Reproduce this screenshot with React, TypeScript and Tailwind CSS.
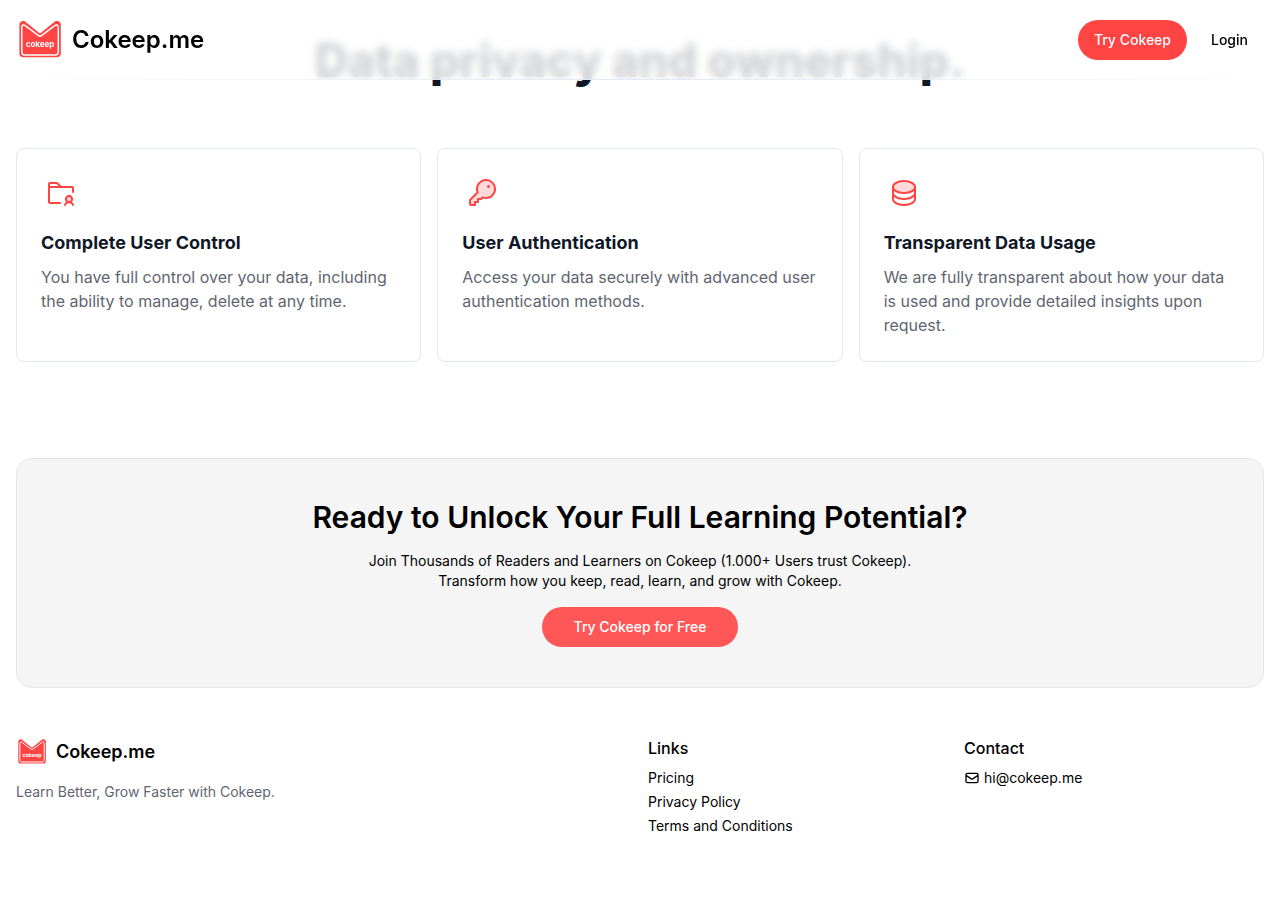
import type { ReactNode } from 'react';
import { HiOutlineMail } from 'react-icons/hi';
import { PiDatabaseDuotone, PiFolderUserDuotone, PiKeyDuotone } from 'react-icons/pi';

interface Feature {
  title: string;
  description: string;
  icon: ReactNode;
}

const features: Feature[] = [
  {
    title: 'Complete User Control',
    description: 'You have full control over your data, including the ability to manage, delete at any time.',
    icon: <PiFolderUserDuotone className="size-8" />,
  },
  {
    title: 'User Authentication',
    description: 'Access your data securely with advanced user authentication methods.',
    icon: <PiKeyDuotone className="size-8" />,
  },
  {
    title: 'Transparent Data Usage',
    description: 'We are fully transparent about how your data is used and provide detailed insights upon request.',
    icon: <PiDatabaseDuotone className="size-8" />,
  },
];

const links = ['Pricing', 'Privacy Policy', 'Terms and Conditions'];

const Logo = ({ className }: { className: string }) => (
  <svg viewBox="0 0 48 48" className={className} aria-hidden="true">
    <path
      d="M3.4 9C3.4 6 5.3 5 6.8 5H7.5C8.5 5 9.2 5.500 10 6.200L24 17.500L38 6.200C38.800 5.500 39.500 5 40.500 5H41.300C43 5 44.800 6 44.800 9V37.500C44.800 40 43.300 41.300 41 41.300H7.200C4.900 41.300 3.400 40 3.400 37.500Z"
      fill="#ff4444"
    />
    <path
      d="M5.800 11.500C5.800 8.800 7.700 8.300 9.300 9.700L22.500 19.700Q24 20.800 25.500 19.700L38.700 9.700C40.300 8.300 42.300 8.800 42.300 11.500V35.500C42.300 37.800 41.300 39 39.300 39H8.800C6.800 39 5.800 37.800 5.800 35.500Z"
      fill="none"
      stroke="#fff"
      strokeWidth="1.5"
    />
    <text
      x="24"
      y="31"
      textAnchor="middle"
      fontFamily="Inter, sans-serif"
      fontSize="8"
      fontWeight="700"
      fill="#fff"
    >
      cokeep
    </text>
  </svg>
);

const Header = () => (
  <header className="fixed inset-x-0 top-0 z-10 bg-white/80 backdrop-blur-xs">
    <div className="flex h-20 items-center justify-between px-4">
      <a href="#" className="flex items-center gap-2">
        <Logo className="size-12" />
        <span className="text-2xl font-semibold">Cokeep.me</span>
      </a>
      <nav className="flex items-center gap-2 text-sm font-medium">
        <button className="h-10 rounded-full bg-[#ff4444] px-4 text-white">Try Cokeep</button>
        <a href="#login" className="px-4 py-2">Login</a>
      </nav>
    </div>
    {/* Divider fading out towards both edges */}
    <div className="absolute inset-x-0 bottom-0 h-px bg-linear-to-r from-transparent via-slate-200 to-transparent"></div>
  </header>
);

const FeatureCard = ({ feature }: { feature: Feature }) => (
  <div className="rounded-lg border border-slate-200 p-6">
    <div className="mb-4 flex size-10 items-center justify-center text-[#ff4444]">{feature.icon}</div>
    <h3 className="mb-2 text-lg leading-7 font-bold text-gray-900">{feature.title}</h3>
    <p className="text-base text-[#5f6670]">{feature.description}</p>
  </div>
);

const CallToAction = () => (
  <section className="mt-24 flex flex-col items-center gap-4 rounded-2xl border border-neutral-200 bg-neutral-100 px-4 py-10 text-center">
    <h2 className="text-3xl font-semibold">Ready to Unlock Your Full Learning Potential?</h2>
    <p className="text-sm">
      Join Thousands of Readers and Learners on Cokeep (1.000+ Users trust Cokeep).
      <br />
      Transform how you keep, read, learn, and grow with Cokeep.
    </p>
    <button className="h-10 rounded-full bg-[#ff5757] px-8 text-sm font-medium text-white">
      Try Cokeep for Free
    </button>
  </section>
);

const Footer = () => (
  <footer className="grid grid-cols-1 gap-4 py-12 md:grid-cols-4">
    <div className="md:col-span-2">
      <a href="#" className="flex items-center gap-2">
        <Logo className="size-8" />
        <span className="text-lg font-semibold">Cokeep.me</span>
      </a>
      <p className="mt-3.5 text-sm text-[#5f6670]">Learn Better, Grow Faster with Cokeep.</p>
    </div>
    <div>
      <h4 className="mb-2 font-medium">Links</h4>
      <ul className="space-y-1 text-sm">
        {links.map((link) => (
          <li key={link}>
            <a href="#">{link}</a>
          </li>
        ))}
      </ul>
    </div>
    <div>
      <h4 className="mb-2 font-medium">Contact</h4>
      <a href="mailto:hi@cokeep.me" className="flex items-center gap-1 text-sm">
        <HiOutlineMail className="size-4" />
        hi@cokeep.me
      </a>
    </div>
  </footer>
);

export default function App() {
  return (
    <div className="bg-white font-[Inter,sans-serif] text-black">
      <Header />
      <main className="px-4 pt-9">
        <h2 className="mb-16 text-center text-[46px] leading-12 font-extrabold text-gray-900">
          Data privacy and ownership.
        </h2>
        <div className="grid gap-4 md:grid-cols-3">
          {features.map((feature) => (
            <FeatureCard key={feature.title} feature={feature} />
          ))}
        </div>
        <CallToAction />
        <Footer />
      </main>
    </div>
  );
}
